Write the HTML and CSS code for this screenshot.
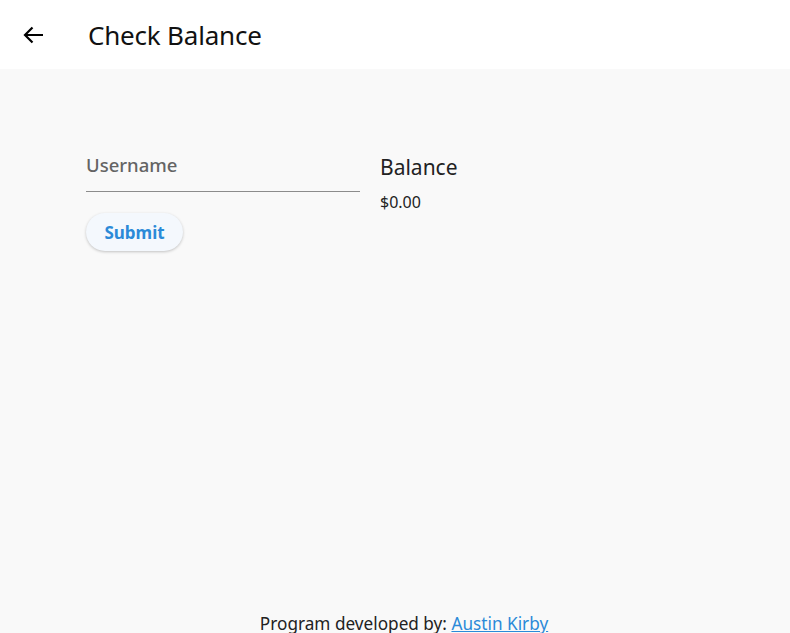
FILE: index.html
```html
<!DOCTYPE html>
<html>
<head>
<meta charset="utf-8">
<link rel="stylesheet" href="styles.css">
</head>
<body>
<div class="page">
  <header class="appbar">
    <button class="back" aria-label="Back">
      <svg width="24" height="24" viewBox="0 0 24 24"><path d="M22 12H4M11.5 4.5L4 12l7.5 7.5" fill="none" stroke="#000" stroke-width="2.2"/></svg>
    </button>
    <h1 class="title">Check Balance</h1>
  </header>
  <main class="content">
    <div class="form">
      <div class="field">
        <span class="label">Username</span>
      </div>
      <button class="submit">Submit</button>
    </div>
    <div class="balance">
      <div class="balance-title">Balance</div>
      <div class="balance-value">$0.00</div>
    </div>
  </main>
  <footer class="footer">Program developed by: <a href="#" class="link">Austin Kirby</a></footer>
</div>
</body>
</html>
```
FILE: styles.css
```css
html, body {
  margin: 0;
  padding: 0;
  background: #f9f9f9;
  font-family: "Noto Sans", "Open Sans", sans-serif;
  overflow: hidden;
}
.page {
  display: flex;
  flex-direction: column;
  min-height: calc(100vh + 3px);
}
.appbar {
  height: 69px;
  background: #fff;
  display: flex;
  align-items: center;
}
.back {
  border: none;
  background: none;
  padding: 0;
  margin-left: 21px;
  width: 24px;
  height: 24px;
  display: flex;
}
.title {
  margin: 0 0 0 43px;
  font-weight: 400;
  font-size: 26px;
  color: #111;
  letter-spacing: -0.2px;
}
.content {
  flex: 1;
  display: flex;
  padding: 84px 0 0 86px;
  gap: 20px;
}
.form {
  width: 274px;
  display: flex;
  flex-direction: column;
  align-items: flex-start;
}
.field {
  width: 274px;
  height: 38px;
  border-bottom: 1px solid #8c8c8c;
  display: flex;
  align-items: flex-start;
}
.label {
  font-size: 18.5px;
  font-weight: 500;
  color: #646464;
  line-height: 1;
  margin-top: 3px;
}
.submit {
  margin-top: 21px;
  height: 38px;
  width: 97px;
  border: none;
  border-radius: 19px;
  background: #f4f8fd;
  box-shadow: 0 1px 3px rgba(0,0,0,0.22);
  color: #2b8ad8;
  font-family: inherit;
  font-size: 17px;
  font-weight: 700;
  padding: 0;
}
.balance {
  display: flex;
  flex-direction: column;
  padding-top: 0;
}
.balance-title {
  font-size: 21px;
  color: #222;
  line-height: 28px;
}
.balance-value {
  margin-top: 11px;
  font-size: 16px;
  color: #222;
  line-height: 20px;
}
.footer {
  text-align: center;
  font-size: 17.2px;
  color: #222;
  line-height: 24px;
  padding-left: 18px;
}
.link {
  color: #2b8ad8;
}
```
